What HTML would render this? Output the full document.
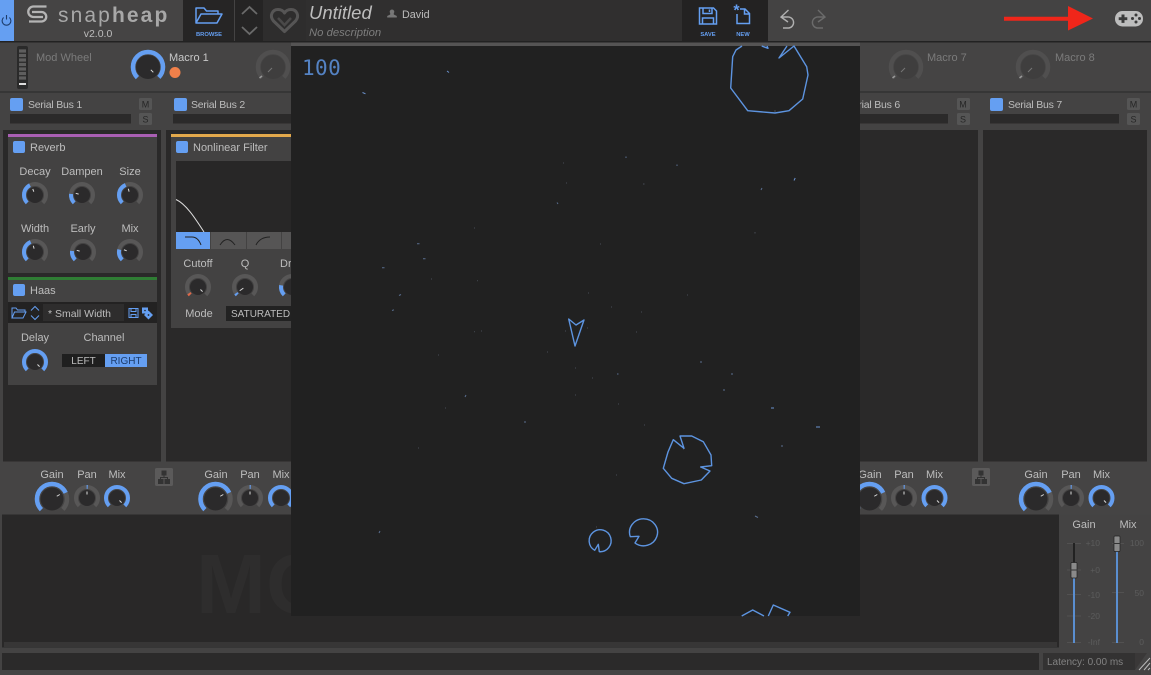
<!DOCTYPE html>
<html><head><meta charset="utf-8"><title>snapheap</title>
<style>
html,body{margin:0;padding:0;background:#444;width:1151px;height:675px;overflow:hidden}
svg{display:block}
text{font-family:"Liberation Sans",sans-serif;fill:#bdbdbd;font-size:11px}
.c{text-anchor:middle}
.t,.v,.r{fill:none;transform:rotate(135deg);stroke-width:4;stroke:#585757;stroke-dasharray:75 100}
.v{stroke:#659ff2}
.r{stroke:#e0694a}
.dim{stroke:#504f4f}
.b{fill:#2b2a2b}
.p{stroke:#ddd;stroke-width:1;fill:none}
.bl{fill:none;stroke:#659ff2;stroke-width:1.5}
.ck{fill:#659ff2}
.ms{fill:#555}
.mt{fill:#262626;font-size:9px;text-anchor:middle}
.a{fill:none;stroke:#5d94e0;stroke-width:1.4;stroke-linejoin:round}
.tk{stroke:#525151;stroke-width:1;fill:none}
.sc{fill:#5c5c5c;font-size:8.5px;text-anchor:end}
.big{stroke-width:4.5}
.sb{font-size:10.5px;letter-spacing:-.22px}
</style></head>
<body>
<svg width="1151" height="675" viewBox="0 0 1151 675" xmlns="http://www.w3.org/2000/svg">
<rect width="1151" height="675" fill="#444343"/>

<!-- header -->
<rect x="0" y="0" width="14" height="41" fill="#659ff2"/>
<path d="M3.600 17.500a4.400 4.400 0 1 0 5.800 0M6.500 15v4.500" fill="none" stroke="#1d3c6b" stroke-width="1.100"/>
<rect x="14" y="0" width="169" height="41" fill="#454444"/>
<path d="M46.500 6.500H33.500a5.250 5.250 0 0 0 0 10.500H43M29 21.500H41.500a4.750 4.750 0 0 0 0-9.500H32" fill="none" stroke="#b4b4b4" stroke-width="2.300"/>
<text x="58" y="22" style="font-size:21px;letter-spacing:2.100px;fill:#a8a8a8">snap<tspan style="font-weight:bold;fill:#a8a8a8">heap</tspan></text>
<text x="98" y="37" class="c" style="font-size:10.500px;fill:#bdbdbd">v2.0.0</text>
<rect x="183" y="0" width="51" height="41" fill="#262525"/>
<path d="M196 23V8h8l2.500 3H218v3.500M196 23l5-9h21l-5 9z" class="bl" stroke-linejoin="round"/>
<text x="209" y="36" class="c" style="font-size:5.800px;font-weight:bold;fill:#659ff2">BROWSE</text>
<rect x="235" y="0" width="28" height="41" fill="#252424"/>
<path d="M242 14l7.500-7 7.500 7M242 27l7.500 7 7.500-7" fill="none" stroke="#6a6a6a" stroke-width="1.800"/>
<rect x="263" y="0" width="43" height="41" fill="#2e2d2d"/>
<path d="M284.500 31.500L273.500 21C269 15.500 272.500 9.500 278 9.500Q282.500 9.500 284.500 13Q286.500 9.500 291 9.500C296.500 9.500 300 15.500 295.500 21Z" fill="none" stroke="#565555" stroke-width="3" stroke-linejoin="round"/>
<path d="M278 18L284.500 25L291 18" fill="none" stroke="#4a4949" stroke-width="2.500"/>
<rect x="306" y="0" width="376" height="41" fill="#302f2f"/>
<text x="309" y="19" style="font-size:18.500px;font-style:italic;fill:#bdbdbd">Untitled</text>
<text x="309" y="36" style="font-size:11.300px;font-style:italic;fill:#7d7d7d">No description</text>
<path d="M392 9.500a2.300 2.300 0 0 1 1.800 3.800v1.200l3 1.500v1.500h-9.600V16l3-1.500v-1.200A2.300 2.300 0 0 1 392 9.500z" fill="#777"/>
<text x="402" y="18" style="font-size:10.800px;fill:#bdbdbd">David</text>
<rect x="682" y="0" width="86" height="41" fill="#232222"/>
<path d="M699.500 8h14l3 3v13h-17zM703 8v5.500h9V8M709.500 9.500v2.500M702.500 24v-6h11v6" class="bl"/>
<text x="708" y="36" class="c" style="font-size:5.800px;font-weight:bold;fill:#659ff2">SAVE</text>
<path d="M740 9h5l4.500 4.500V23.500H737V14M744.500 9v5h5" class="bl"/>
<text x="736.500" y="15.500" class="c" style="font-size:16px;font-weight:bold;fill:#659ff2">*</text>
<text x="743" y="36" class="c" style="font-size:5.800px;font-weight:bold;fill:#659ff2">NEW</text>
<path d="M788.500 10L781 17L788 22M781 17H787a5.500 5.500 0 0 1 2 11H783" fill="none" stroke="#b0b0b0" stroke-width="1.400"/>
<path d="M818 10L825 17L818 22M825 17H819a5.500 5.500 0 0 0 -2 11H823" fill="none" stroke="#6b6b6b" stroke-width="1.400"/>
<path d="M1004 16.800H1068V6L1093 18.500L1068 30.500V20.800H1004Z" fill="#f0261a"/>
<rect x="1115" y="11" width="28" height="15.500" rx="7.500" fill="#bdbdbd"/>
<path d="M1121.500 14.500h3v2.800h2.800v2.800h-2.800v2.800h-3v-2.800h-2.800v-2.800h2.800z" fill="#3a3a3a"/>
<circle cx="1136" cy="15" r="1.500" fill="#3a3a3a"/><circle cx="1136" cy="22" r="1.500" fill="#3a3a3a"/><circle cx="1132.500" cy="18.500" r="1.500" fill="#3a3a3a"/><circle cx="1139.500" cy="18.500" r="1.500" fill="#3a3a3a"/>
<rect x="0" y="41" width="1151" height="1.500" fill="#222"/>

<!-- macro row -->
<rect x="0" y="42.500" width="1151" height="49" fill="#454444"/>
<rect x="17" y="46" width="11" height="43" rx="2" fill="#2a2a2a"/>
<path d="M19 51h7M19 55.500h7M19 60h7M19 64.500h7M19 69h7M19 73.500h7M19 78h7" stroke="#5e5e5e" stroke-width="3.300"/>
<rect x="19" y="83" width="7" height="2" fill="#ddd"/>
<text x="36" y="61" style="fill:#7b7b7b">Mod Wheel</text>
<g transform="translate(148 67)"><circle r="15" pathLength="100" class="t big"/><circle r="15" pathLength="100" class="v big"/><circle r="12" class="b"/><path class="p" d="M0 7.500V4" transform="rotate(-45)" /></g>
<text x="169" y="61" style="fill:#c8c8c8">Macro 1</text>
<circle cx="175" cy="72.500" r="5.500" fill="#f0804a"/>
<g transform="translate(273 67)"><circle r="15" pathLength="100" class="t big dim"/><circle r="12" fill="#3f3e3e"/><path d="M-5 5L-1 1" class="p" style="stroke:#777"/><path d="M-13.500 11L-11 9" stroke="#999" stroke-width="1.500"/></g>
<g transform="translate(906 67)"><circle r="15" pathLength="100" class="t big dim"/><circle r="12" fill="#3f3e3e"/><path d="M-5 5L-1 1" class="p" style="stroke:#777"/><path d="M-13.500 11L-11 9" stroke="#999" stroke-width="1.500"/></g>
<text x="927" y="61" style="fill:#7b7b7b">Macro 7</text>
<g transform="translate(1033 67)"><circle r="15" pathLength="100" class="t big dim"/><circle r="12" fill="#3f3e3e"/><path d="M-5 5L-1 1" class="p" style="stroke:#777"/><path d="M-13.500 11L-11 9" stroke="#999" stroke-width="1.500"/></g>
<text x="1055" y="61" style="fill:#7b7b7b">Macro 8</text>
<rect x="0" y="91.500" width="1151" height="1" fill="#282828"/>

<!-- bus headers -->
<rect x="10" y="98" width="13" height="13" rx="2" class="ck"/>
<text x="28" y="108" class="sb">Serial Bus 1</text>
<rect x="10" y="114" width="121" height="9.500" fill="#2b2a2a"/>
<rect x="139" y="98" width="13" height="12" rx="1.500" class="ms"/><text x="145.500" y="107.500" class="mt">M</text>
<rect x="139" y="113" width="13" height="12" rx="1.500" class="ms"/><text x="145.500" y="122.500" class="mt">S</text>
<rect x="174" y="98" width="13" height="13" rx="2" class="ck"/>
<text x="191" y="108" class="sb">Serial Bus 2</text>
<rect x="173" y="114" width="120" height="9.500" fill="#2b2a2a"/>
<text x="846" y="108" class="sb">Serial Bus 6</text>
<rect x="850" y="114" width="98" height="9.500" fill="#2b2a2a"/>
<rect x="957" y="98" width="13" height="12" rx="1.500" class="ms"/><text x="963" y="107.500" class="mt">M</text>
<rect x="957" y="113" width="13" height="12" rx="1.500" class="ms"/><text x="963" y="122.500" class="mt">S</text>
<rect x="990" y="98" width="13" height="13" rx="2" class="ck"/>
<text x="1008" y="108" class="sb">Serial Bus 7</text>
<rect x="990" y="114" width="129" height="9.500" fill="#2b2a2a"/>
<rect x="1127" y="98" width="13" height="12" rx="1.500" class="ms"/><text x="1133.500" y="107.500" class="mt">M</text>
<rect x="1127" y="113" width="13" height="12" rx="1.500" class="ms"/><text x="1133.500" y="122.500" class="mt">S</text>

<!-- chain columns -->
<rect x="3" y="130" width="158" height="331.500" fill="#2a2929"/>
<rect x="166" y="130" width="140" height="331.500" fill="#2a2929"/>
<rect x="850" y="130" width="128" height="331.500" fill="#2a2929"/>
<rect x="983" y="130" width="164" height="331.500" fill="#2a2929"/>

<!-- Reverb -->
<rect x="8" y="134" width="149" height="139" fill="#434242"/>
<rect x="8" y="134" width="149" height="3" fill="#a95fb3"/>
<rect x="13" y="141" width="12" height="12" rx="2" class="ck"/>
<text x="30" y="151">Reverb</text>
<text x="35" y="175" class="c">Decay</text><text x="82" y="175" class="c">Dampen</text><text x="130" y="175" class="c">Size</text>
<text x="35" y="232" class="c">Width</text><text x="83" y="232" class="c">Early</text><text x="130" y="232" class="c">Mix</text>
<g transform="translate(35 195)"><circle r="11" pathLength="100" class="t"/><circle r="11" pathLength="100" class="v" style="stroke-dasharray:30 100"/><circle r="8" class="b"/><path class="p" d="M0 -6.500V-3.500" transform="rotate(-20)"/></g>
<g transform="translate(82 195)"><circle r="11" pathLength="100" class="t"/><circle r="11" pathLength="100" class="v" style="stroke-dasharray:14 100"/><circle r="8" class="b"/><path class="p" d="M0 -6.500V-3.500" transform="rotate(-75)"/></g>
<g transform="translate(130 195)"><circle r="11" pathLength="100" class="t"/><circle r="11" pathLength="100" class="v" style="stroke-dasharray:31 100"/><circle r="8" class="b"/><path class="p" d="M0 -6.500V-3.500" transform="rotate(-15)"/></g>
<g transform="translate(35 252)"><circle r="11" pathLength="100" class="t"/><circle r="11" pathLength="100" class="v" style="stroke-dasharray:31 100"/><circle r="8" class="b"/><path class="p" d="M0 -6.500V-3.500" transform="rotate(-15)"/></g>
<g transform="translate(83 252)"><circle r="11" pathLength="100" class="t"/><circle r="11" pathLength="100" class="v" style="stroke-dasharray:14 100"/><circle r="8" class="b"/><path class="p" d="M0 -6.500V-3.500" transform="rotate(-75)"/></g>
<g transform="translate(130 252)"><circle r="11" pathLength="100" class="t"/><circle r="11" pathLength="100" class="v" style="stroke-dasharray:16 100"/><circle r="8" class="b"/><path class="p" d="M0 -6.500V-3.500" transform="rotate(-70)"/></g>

<!-- Haas -->
<rect x="8" y="277" width="149" height="108" fill="#434242"/>
<rect x="8" y="277" width="149" height="3" fill="#2f7d34"/>
<rect x="13" y="284" width="12" height="12" rx="2" class="ck"/>
<text x="30" y="294">Haas</text>
<rect x="8" y="302" width="149" height="21" fill="#232222"/>
<rect x="43" y="304" width="81" height="17" fill="#2e2d2d"/>
<path d="M12 318V308h4l1.500 2H25v2M12 318l2.500-6H26l-3 6z" fill="none" stroke="#659ff2" stroke-width="1"/>
<path d="M31 310.500l4-4 4 4M31 315.500l4 4 4-4" fill="none" stroke="#659ff2" stroke-width="1"/>
<text x="48" y="317" style="font-size:10.500px">* Small Width</text>
<path d="M129 308.500h9v9h-9zM131 308.500v3h5v-3M131 317.500v-3h5v3" fill="none" stroke="#659ff2" stroke-width="1"/>
<path d="M142 307.500h6v6h-6z" fill="#659ff2"/><path d="M148.500 310.500l4.500 4.500-4.500 4.500-4.500-4.500z" fill="#659ff2"/>
<circle cx="148.500" cy="315" r=".9" fill="#232222"/><circle cx="145" cy="310.500" r=".8" fill="#232222"/>
<text x="35" y="341" class="c">Delay</text><text x="104" y="341" class="c">Channel</text>
<g transform="translate(35 362)"><circle r="11" pathLength="100" class="v"/><circle r="8" class="b"/><path class="p" d="M0 6.500V3.500" transform="rotate(-45)"/></g>
<rect x="62" y="354" width="43" height="13" fill="#1f1f1f"/>
<rect x="105" y="354" width="42" height="13" fill="#659ff2"/>
<text x="83.500" y="364" class="c" style="font-size:10px">LEFT</text>
<text x="126" y="364" class="c" style="font-size:10px;fill:#1d3c6b">RIGHT</text>

<!-- Nonlinear filter -->
<rect x="171" y="134" width="125" height="194" fill="#434242"/>
<rect x="171" y="134" width="125" height="3" fill="#e3a94c"/>
<rect x="176" y="141" width="12" height="12" rx="2" class="ck"/>
<text x="193" y="151">Nonlinear Filter</text>
<rect x="176" y="161" width="120" height="71" fill="#282727"/>
<path d="M176 199.500C186 204 195 218 204 232" fill="none" stroke="#ddd" stroke-width="1"/>
<rect x="176" y="232" width="34" height="17" fill="#659ff2"/>
<rect x="211" y="232" width="35" height="17" fill="#565555"/><rect x="247" y="232" width="34" height="17" fill="#565555"/><rect x="282" y="232" width="14" height="17" fill="#565555"/>
<path d="M185 237h7q6 0 9 8M220 245q7-11 15 0M256 245q4-8 14-8" fill="none" stroke="#222" stroke-width="1"/>
<text x="198" y="267" class="c">Cutoff</text><text x="245" y="267" class="c">Q</text><text x="280" y="267">Dr</text>
<g transform="translate(198 287)"><circle r="11" pathLength="100" class="t"/><circle r="11" pathLength="100" class="r" style="stroke-dasharray:3 100"/><circle r="8" class="b"/><path class="p" d="M0 6.500V3.500" transform="rotate(-45)"/></g>
<g transform="translate(245 287)"><circle r="11" pathLength="100" class="t"/><circle r="11" pathLength="100" class="v" style="stroke-dasharray:3 100"/><circle r="8" class="b"/><path class="p" d="M0 -6.500V-2" transform="rotate(-125)"/></g>
<g transform="translate(292 287)"><circle r="11" pathLength="100" class="t"/><circle r="11" pathLength="100" class="v" style="stroke-dasharray:15 100"/><circle r="8" class="b"/></g>
<text x="199" y="317" class="c">Mode</text>
<rect x="226" y="306" width="70" height="15" fill="#222"/>
<text x="231" y="317" style="font-size:10px">SATURATED</text>

<!-- mixer row -->
<rect x="0" y="461.500" width="1151" height="53" fill="#454444"/>
<text x="52" y="478" class="c">Gain</text><text x="87" y="478" class="c">Pan</text><text x="117" y="478" class="c">Mix</text>
<g transform="translate(52 499)"><circle r="15" pathLength="100" class="t big"/><circle r="15" pathLength="100" class="v big" style="stroke-dasharray:56 100"/><circle r="11.500" class="b"/><path class="p" d="M0 -9V-5.500" transform="rotate(60)"/></g>
<g transform="translate(87 498)"><circle r="11" pathLength="100" class="t"/><circle r="11" pathLength="100" class="v" style="stroke-dasharray:0 37 1.500 100"/><circle r="8" class="b"/><path class="p" d="M0 -6.500V-3.500"/></g>
<g transform="translate(117 498)"><circle r="11" pathLength="100" class="v"/><circle r="8" class="b"/><path class="p" d="M0 6.500V3.500" transform="rotate(-45)"/></g>
<rect x="155" y="468" width="18" height="18" rx="1.500" fill="#5b5a5a"/>
<path d="M161.500 470.500h5v5h-5zM158 479h5.500v5H158zM164.500 479H170v5h-5.500z" fill="#333"/><path d="M164 475v2.500h-3.500V479M164 477.500h3.500V479" fill="none" stroke="#333"/>
<text x="216" y="478" class="c">Gain</text><text x="250" y="478" class="c">Pan</text><text x="281" y="478" class="c">Mix</text>
<g transform="translate(215.500 499)"><circle r="15" pathLength="100" class="t big"/><circle r="15" pathLength="100" class="v big" style="stroke-dasharray:56 100"/><circle r="11.500" class="b"/><path class="p" d="M0 -9V-5.500" transform="rotate(60)"/></g>
<g transform="translate(250 498)"><circle r="11" pathLength="100" class="t"/><circle r="11" pathLength="100" class="v" style="stroke-dasharray:0 37 1.500 100"/><circle r="8" class="b"/><path class="p" d="M0 -6.500V-3.500"/></g>
<g transform="translate(281 498)"><circle r="11" pathLength="100" class="v"/><circle r="8" class="b"/></g>
<text x="870" y="478" class="c">Gain</text><text x="904" y="478" class="c">Pan</text><text x="934.500" y="478" class="c">Mix</text>
<g transform="translate(869.500 499)"><circle r="15" pathLength="100" class="t big"/><circle r="15" pathLength="100" class="v big" style="stroke-dasharray:56 100"/><circle r="11.500" class="b"/><path class="p" d="M0 -9V-5.500" transform="rotate(60)"/></g>
<g transform="translate(904 498)"><circle r="11" pathLength="100" class="t"/><circle r="11" pathLength="100" class="v" style="stroke-dasharray:0 37 1.500 100"/><circle r="8" class="b"/><path class="p" d="M0 -6.500V-3.500"/></g>
<g transform="translate(934.500 498)"><circle r="11" pathLength="100" class="v"/><circle r="8" class="b"/><path class="p" d="M0 6.500V3.500" transform="rotate(-45)"/></g>
<rect x="972" y="468" width="18" height="18" rx="1.500" fill="#5b5a5a"/>
<path d="M978.500 470.500h5v5h-5zM975 479h5.500v5H975zM981.500 479H987v5h-5.500z" fill="#333"/><path d="M981 475v2.500h-3.500V479M981 477.500h3.500V479" fill="none" stroke="#333"/>
<text x="1036" y="478" class="c">Gain</text><text x="1071" y="478" class="c">Pan</text><text x="1101.500" y="478" class="c">Mix</text>
<g transform="translate(1036 499)"><circle r="15" pathLength="100" class="t big"/><circle r="15" pathLength="100" class="v big" style="stroke-dasharray:56 100"/><circle r="11.500" class="b"/><path class="p" d="M0 -9V-5.500" transform="rotate(60)"/></g>
<g transform="translate(1071 498)"><circle r="11" pathLength="100" class="t"/><circle r="11" pathLength="100" class="v" style="stroke-dasharray:0 37 1.500 100"/><circle r="8" class="b"/><path class="p" d="M0 -6.500V-3.500"/></g>
<g transform="translate(1101.500 498)"><circle r="11" pathLength="100" class="v"/><circle r="8" class="b"/><path class="p" d="M0 6.500V3.500" transform="rotate(-45)"/></g>

<!-- lower area -->
<rect x="2" y="514.500" width="1057" height="133" fill="#292828"/>
<text x="196" y="613" style="font-size:84px;font-weight:bold;fill:#2e2d2d">MO</text>
<rect x="4" y="642" width="1053" height="5" fill="#373636"/>

<!-- master -->
<rect x="1059" y="514.500" width="92" height="133.500" fill="#444343"/>
<text x="1084" y="528" class="c">Gain</text><text x="1128" y="528" class="c">Mix</text>
<path class="tk" d="M1067 543.500h14M1067 570h14M1067 594.500h14M1067 616h14M1067 642.500h14M1112 543.500h12M1112 592.500h12M1112 642.500h12"/>
<rect x="1073" y="543" width="2" height="20" fill="#222"/>
<rect x="1073" y="578" width="2" height="65" fill="#5a8ed0"/>
<rect x="1071" y="562.500" width="6" height="15.500" rx="1" fill="#8a8a8a" stroke="#222" stroke-width=".7"/>
<rect x="1071" y="569.500" width="6" height="1" fill="#333"/>
<rect x="1116" y="550" width="2" height="93" fill="#5a8ed0"/>
<rect x="1114" y="536" width="6" height="15.500" rx="1" fill="#8a8a8a" stroke="#222" stroke-width=".7"/>
<rect x="1114" y="543" width="6" height="1" fill="#333"/>
<text x="1100" y="546" class="sc">+10</text><text x="1100" y="573" class="sc">+0</text><text x="1100" y="598" class="sc">-10</text><text x="1100" y="619" class="sc">-20</text><text x="1100" y="645" class="sc">-Inf</text>
<text x="1144" y="546" class="sc">100</text><text x="1144" y="596" class="sc">50</text><text x="1144" y="645" class="sc">0</text>

<!-- footer -->
<rect x="0" y="648" width="1151" height="27" fill="#444343"/>
<rect x="2" y="653" width="1037" height="17" fill="#2b2a2a"/>
<rect x="1043" y="653" width="92" height="17" fill="#333232"/>
<path d="M1135 653h12l-12 17z" fill="#333232" opacity=".6"/>
<text x="1047" y="665" style="font-size:10px;fill:#828282">Latency: 0.00 ms</text>
<path d="M1139 670l11-12M1144 670l6-7M1148 670l2-2" stroke="#bbb" stroke-width="1" fill="none"/>

<!-- game -->
<rect x="291" y="42.500" width="569" height="3.500" fill="#555454"/>
<rect x="291" y="46" width="569" height="570" fill="#212121"/>
<text x="302" y="75" style="font-family:'DejaVu Sans Mono',monospace;font-size:21px;letter-spacing:.4px;fill:#5d94e0;opacity:.85">100</text>
<path d="M447 71l2 1.500M362.500 92.500l3 1.300M794 180.500l1.200-2.500M771 408h3M816 427h4" stroke="#6c93cf" stroke-width="1" fill="none"/>
<path d="M626 156.500v1.500M677 164.500v1.500M761 190l1-2M417 243.700h2.500M423 258.700h2.500M382 267.700h2.500M399 295.500l2-1M392 310.500l2-.7M557 202.500l1 1.500M755 516l3 1.500M380 531l-1 2M781 446h2M466 395l-1 2M525 421v2M617 374h1.500M731 374h2M723 390h2M700 362h2" stroke="#5a6f90" stroke-width="1" fill="none"/>
<path d="M563 163h1M566 183h1M643 184h1.500M755 232v1.500M600 244h1M474 228h1M431 279h1M477 280.700h1M588 293h1M474 331.700h1M481 331h1M565 331h1M587 328h1M547 352h1M438 355h1M687 295h1M611 307h1M641 312h1M636 332h1M592 378h1M618 404h1M445 408h1M418 448h1M575 368h1M575 395h1M616 475h1M596 527h1M683 449h1M775 112v-2M644 425h1" stroke="#40444b" stroke-width="1.200" fill="none"/>
<path class="a" d="M742 46L736 50L732.700 56.700L730.700 88L747.700 110.700L775 113L789 110.700L802.700 99L808 75L806.700 66.700L794 46L779 58L787 46"/>
<path class="a" d="M761.700 46L768 48.300L767 46"/>
<path class="a" d="M673.300 439.700L684 448.300L680 436L691.700 436L703.300 441.700L711 455L711.700 465.700L700.700 467L710 471L701.300 480L684 483.700L671.700 478.300L663.300 468.300L668 452Z"/>
<path class="a" d="M630.300 536.700A14 13.500 0 1 1 635 543L639 536.300Z"/>
<path class="a" d="M594.700 550.300A11 11 0 1 1 599.300 551.700L598.300 544.300Z"/>
<path class="a" d="M741.700 616L752.700 610L764 616M768.300 616L773.300 605L790 612.300L787.700 616"/>
<path class="a" d="M568.700 319L576 325L584 320L575 346Z"/>
</svg>
</body></html>
